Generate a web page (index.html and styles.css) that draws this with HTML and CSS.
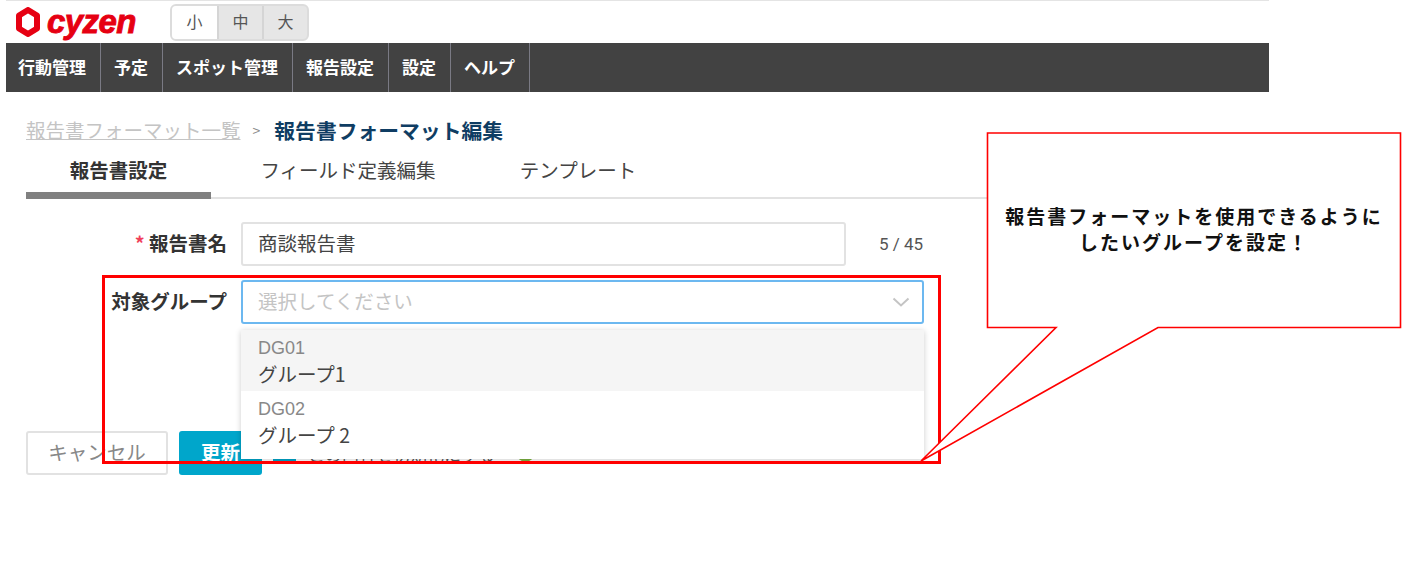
FILE: index.html
```html
<!DOCTYPE html>
<html lang="ja">
<head>
<meta charset="utf-8">
<title>報告書フォーマット編集</title>
<link rel="stylesheet" href="styles.css">
</head>
<body>
<div class="app">
  <header class="top">
    <div class="logo">
      <svg class="logo-mark" width="24" height="30" viewBox="0 0 24 30"><path d="M12 3 L21 8.500 V21.500 L12 27 L3 21.500 V8.500 Z" fill="none" stroke="#e60012" stroke-width="6" stroke-linejoin="round"/></svg>
      <span class="logo-text">cyzen</span>
    </div>
    <div class="sizes"><span class="size on">小</span><span class="size">中</span><span class="size">大</span></div>
  </header>
  <nav class="nav">
    <a class="nav-item">行動管理</a><a class="nav-item">予定</a><a class="nav-item">スポット管理</a><a class="nav-item">報告設定</a><a class="nav-item">設定</a><a class="nav-item">ヘルプ</a>
  </nav>
  <main class="content">
    <div class="crumbs"><a class="crumb-link">報告書フォーマット一覧</a><span class="crumb-sep">&gt;</span><strong class="crumb-now">報告書フォーマット編集</strong></div>
    <div class="tabs">
      <div class="tab active">報告書設定</div>
      <div class="tab tab-fields">フィールド定義編集</div>
      <div class="tab">テンプレート</div>
    </div>
    <div class="row row-name">
      <label class="label"><span class="req">*</span> 報告書名</label>
      <div class="input">商談報告書</div>
      <span class="count">5 / 45</span>
    </div>
    <div class="row row-group">
      <label class="label">対象グループ</label>
      <div class="select"><span>選択してください</span>
        <svg class="chev" width="18" height="10" viewBox="0 0 18 10"><path d="M1.500 1.500 L9 8.500 L16.500 1.500" fill="none" stroke="#c4c4c4" stroke-width="2"/></svg>
      </div>
    </div>
    <div class="actions">
      <button class="btn">キャンセル</button>
      <button class="btn primary">更新</button>
      <span class="check"></span>
      <span class="check-label">この内容を初期化にする</span>
      <span class="dot"></span>
    </div>
  </main>
  <ul class="dropdown">
    <li class="opt hover"><span class="opt-code">DG01</span><span class="opt-name">グループ1</span></li>
    <li class="opt"><span class="opt-code">DG02</span><span class="opt-name">グループ 2</span></li>
  </ul>
  <div class="highlight"></div>
  <svg class="callout" width="1417" height="584" viewBox="0 0 1417 584"><path d="M987.500 133 H1400.500 V327.500 H1158 L921 461 L1056 327.500 H987.500 Z" fill="#fff" stroke="#f00" stroke-width="1.600"/></svg>
  <div class="callout-text">報告書フォーマットを使用できるように<br>したいグループを設定！</div>
</div>
</body>
</html>
```
FILE: styles.css
```css
* { box-sizing: border-box; }
html, body { margin: 0; padding: 0; background: #fff; }
body { font-family: "Noto Sans CJK JP", "Liberation Sans", sans-serif; color: #333; }
.app { position: relative; width: 1417px; height: 584px; overflow: hidden; }
.top { width: 1263px; height: 43px; margin-left: 6px; border-top: 1px solid #e4e4e4; display: flex; align-items: flex-start; }
.logo { display: flex; align-items: center; width: 164px; height: 41px; padding-left: 10px; }
.logo-mark { flex: none; }
.logo-text { font-family: "Liberation Sans", sans-serif; font-weight: 700; font-style: italic; font-size: 33px; color: #e60012; margin-left: 7px; line-height: 38px; letter-spacing: -0.600px; -webkit-text-stroke: 0.900px #e60012; }
.sizes { display: flex; margin-top: 3px; height: 37px; border: 2px solid #dcdcdc; border-radius: 6px; overflow: hidden; background: #e6e6e6; }
.size { width: 45px; padding-bottom: 3px; display: flex; align-items: center; justify-content: center; font-size: 16px; color: #555; border-left: 2px solid #d5d5d5; }
.size:first-child { border-left: 0; }
.size.on { background: #fff; }
.nav { width: 1263px; margin-left: 6px; height: 49px; background: #424242; display: flex; }
.nav-item { height: 49px; display: flex; align-items: center; padding: 0 14px 3px 13px; font-size: 17px; font-weight: 700; color: #fff; border-right: 1px solid #7a7a84; }
.nav-item:first-child { padding-left: 12px; }
.content { padding: 25px 0 0 26px; width: 1269px; }
.crumbs { display: flex; align-items: center; height: 28px; padding-bottom: 3px; }
.crumb-link { color: #c4c4c4; text-decoration: underline; font-size: 19.500px; }
.crumb-sep { color: #888; font-size: 14px; margin: 0 13px 0 12px; }
.crumb-now { color: #0f3d63; font-weight: 700; font-size: 20.800px; margin-left: 1px; }
.tabs { display: flex; width: 1243px; height: 54px; border-bottom: 2px solid #e2e2e2; }
.tab { width: 186px; height: 54px; padding-top: 12px; text-align: center; font-size: 19.500px; line-height: 26px; color: #444; }
.tab-fields { width: 274px; }
.tab.active { width: 185px; font-weight: 700; color: #333; border-bottom: 7px solid #808080; }
.row { display: flex; align-items: flex-start; }
.row-name { margin-top: 23px; }
.row-group { margin-top: 13px; }
.label { width: 201px; height: 44px; line-height: 41px; text-align: right; font-size: 19.500px; font-weight: 700; color: #333; flex: none; }
.req { color: #f0405a; }
.input { width: 605px; margin-left: 14px; height: 44px; border: 2px solid #e2e2e2; border-radius: 3px; padding-left: 15px; font-size: 19.500px; line-height: 37px; color: #444; }
.count { margin-left: 33px; font-size: 17px; line-height: 45px; color: #555; font-family: "Roboto", sans-serif; }
.select { position: relative; width: 683px; margin-left: 14px; height: 44px; border: 2px solid #6cb8f0; border-radius: 3px; padding-left: 15px; font-size: 19.500px; line-height: 37px; color: #c4c4c4; }
.chev { position: absolute; right: 12px; top: 15px; }
.actions { display: flex; align-items: center; margin-top: 107px; height: 44px; }
.btn { height: 44px; border-radius: 3px; font-family: inherit; font-size: 19.500px; padding: 0 0 4px; }
.btn { width: 142px; border: 2px solid #e2e2e2; background: #fff; color: #888; }
.btn.primary { width: 83px; margin-left: 11px; background: #00a6cb; border: 0; color: #fff; font-weight: 700; }
.check { width: 23px; height: 22px; background: #00a6cb; margin-left: 11px; border-radius: 2px; }
.check-label { font-size: 17px; line-height: 17px; margin-left: 12px; color: #555; }
.dot { width: 17px; height: 17px; border-radius: 50%; background: #7cb342; margin-left: 22px; }
.dropdown { position: absolute; left: 241px; top: 330px; width: 683px; height: 129px; margin: 0; padding: 0; list-style: none; background: #fff; box-shadow: 0 1px 6px rgba(0,0,0,.2); }
.opt { height: 61px; padding: 6px 17px 0; display: flex; flex-direction: column; }
.opt.hover { background: #f5f5f5; }
.opt-code { font-family: "Liberation Sans", sans-serif; font-size: 18px; line-height: 24px; color: #888; }
.opt-name { font-size: 19.500px; line-height: 27px; color: #444; }
.highlight { position: absolute; left: 102px; top: 275px; width: 839px; height: 189px; border: 3px solid #f00; }
.callout { position: absolute; left: 0; top: 0; pointer-events: none; }
.callout-text { position: absolute; left: 988px; top: 203px; width: 412px; text-align: center; font-size: 19px; line-height: 26px; font-weight: 700; color: #111; letter-spacing: 2px; }
```
